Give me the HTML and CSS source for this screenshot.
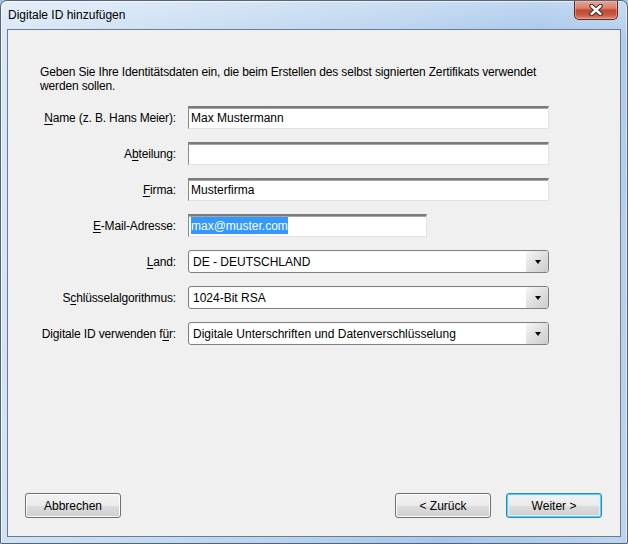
FILE: index.html
```html
<!DOCTYPE html>
<html lang="de">
<head>
<meta charset="utf-8">
<title>Digitale ID hinzufügen</title>
<link rel="stylesheet" href="styles.css">
</head>
<body>
<div class="window">
  <div class="titlebar">
    <span class="title">Digitale ID hinzufügen</span>
    <div class="close">
      <svg width="16" height="12" viewBox="0 0 16 12">
        <path d="M3.5 2 L12.5 10 M12.5 2 L3.5 10" stroke="#3b2a26" stroke-width="4.4" stroke-linecap="round"/>
        <path d="M3.5 2 L12.5 10 M12.5 2 L3.5 10" stroke="#ffffff" stroke-width="2.4" stroke-linecap="round"/>
      </svg>
    </div>
  </div>
  <div class="client">
    <p class="intro">Geben Sie Ihre Identitätsdaten ein, die beim Erstellen des selbst signierten Zertifikats verwendet werden sollen.</p>
    <div class="form">
      <label class="lbl"><u>N</u>ame (z. B. Hans Meier):</label>
      <div class="field">Max Mustermann</div>

      <label class="lbl">A<u>b</u>teilung:</label>
      <div class="field"></div>

      <label class="lbl"><u>F</u>irma:</label>
      <div class="field">Musterfirma</div>

      <label class="lbl"><u>E</u>-Mail-Adresse:</label>
      <div class="field short"><span class="sel">max@muster.com</span></div>

      <label class="lbl"><u>L</u>and:</label>
      <div class="combo"><span class="ctext">DE - DEUTSCHLAND</span><span class="cbtn"><span class="arrow"></span></span></div>

      <label class="lbl">S<u>c</u>hlüsselalgorithmus:</label>
      <div class="combo"><span class="ctext">1024-Bit RSA</span><span class="cbtn"><span class="arrow"></span></span></div>

      <label class="lbl">Digitale ID verwenden f<u>ü</u>r:</label>
      <div class="combo"><span class="ctext">Digitale Unterschriften und Datenverschlüsselung</span><span class="cbtn"><span class="arrow"></span></span></div>
    </div>
    <div class="buttons">
      <button class="btn">Abbrechen</button>
      <div class="spacer"></div>
      <button class="btn">&lt; Zurück</button>
      <button class="btn default">Weiter &gt;</button>
    </div>
  </div>
</div>
</body>
</html>
```

FILE: styles.css
```css
html, body {
  margin: 0;
  padding: 0;
  background: #9fbfe3;
}
body {
  font-family: "Liberation Sans", Arial, sans-serif;
  font-size: 12px;
  color: #000;
}
.window {
  box-sizing: border-box;
  width: 628px;
  height: 544px;
  border: 1px solid #52637a;
  border-radius: 7px 7px 2px 2px;
  padding: 0 6px 6px 6px;
  display: flex;
  flex-direction: column;
  background:
    linear-gradient(to bottom, rgba(255,255,255,0.3), rgba(255,255,255,0) 40px),
    linear-gradient(100deg, #d9e7f6 0%, #c9ddf2 25%, #b6d1ee 55%, #a6c6ea 75%, #bcd4ef 100%);
  box-shadow: inset 1px 1px 0 rgba(255,255,255,0.7), inset -1px 0 0 rgba(255,255,255,0.5);
}
.titlebar {
  height: 28px;
  display: flex;
  align-items: flex-start;
  justify-content: space-between;
}
.title {
  margin-top: 7px;
  margin-left: 1px;
  line-height: 15px;
  color: #000;
}
.close {
  box-sizing: border-box;
  width: 44px;
  height: 19px;
  margin-right: 3px;
  border: 1px solid #5b2b22;
  border-top: none;
  border-radius: 0 0 5px 5px;
  background: linear-gradient(to bottom, #e7a595 0%, #d9806c 40%, #c34a33 50%, #c8563f 75%, #dd8a70 100%);
  box-shadow: inset 0 0 0 1px rgba(255,200,190,0.45);
  display: flex;
  align-items: center;
  justify-content: center;
}
.close svg { display: block; }
.client {
  flex: 1;
  background: #f0f0f0;
  border: 1px solid #6c7c8e;
  display: flex;
  flex-direction: column;
  padding: 35px 18px 18px 17px;
}
.intro {
  margin: 0 0 0 15px;
  line-height: 14px;
  width: 520px;
  letter-spacing: -0.15px;
}
.form {
  margin: 13px 0 0 15px;
  display: grid;
  grid-template-columns: 136px 361px;
  grid-auto-rows: 23px;
  column-gap: 12px;
  row-gap: 13px;
}
.lbl {
  display: flex;
  align-items: center;
  justify-content: flex-end;
  white-space: nowrap;
  letter-spacing: -0.15px;
}
.lbl u { text-decoration-thickness: 1px; text-underline-offset: 2px; }
.field {
  box-sizing: border-box;
  height: 23px;
  background: #fff;
  border-style: solid;
  border-width: 2px 1px 1px 1px;
  border-color: #7b7b7b #e2e2e2 #e2e2e2 #8a8a8a;
  box-shadow: inset 0 1px 0 #a6a6a6;
  padding: 3px 0 0 2px;
  line-height: 15px;
  white-space: nowrap;
  overflow: hidden;
}
.field.short { width: 239px; }
.sel {
  background: #3399ff;
  color: #fff;
  padding: 2px 0 1px 0;
}
.combo {
  box-sizing: border-box;
  height: 23px;
  border: 1px solid #7f7f7f;
  border-radius: 3px;
  background: #fff;
  display: flex;
  align-items: stretch;
  box-shadow: inset 0 0 0 1px #fbfbfb;
  overflow: hidden;
}
.ctext {
  flex: 1;
  display: flex;
  align-items: center;
  padding-left: 4px;
  white-space: nowrap;
}
.cbtn {
  width: 22px;
  display: flex;
  align-items: center;
  justify-content: center;
  background: linear-gradient(to right, rgba(255,255,255,1), rgba(232,232,232,1)),
              linear-gradient(to bottom, #f6f6f6, #e0e0e0);
  background-blend-mode: multiply;
}
.arrow {
  width: 0;
  height: 0;
  border-left: 3.5px solid transparent;
  border-right: 3.5px solid transparent;
  border-top: 4px solid #000;
  margin-left: 2px;
  margin-top: 1px;
}
.buttons {
  margin-top: auto;
  display: flex;
  gap: 15px;
}
.spacer { flex: 1; }
.btn {
  box-sizing: border-box;
  width: 96px;
  height: 25px;
  margin: 0;
  padding: 0;
  font-family: "Liberation Sans", Arial, sans-serif;
  font-size: 12px;
  color: #000;
  border: 1px solid #707070;
  border-radius: 3px;
  background: linear-gradient(to bottom, #f2f2f2 0%, #ebebeb 50%, #dddddd 51%, #cfcfcf 100%);
  box-shadow: inset 0 0 0 1px #fcfcfc;
}
.btn.default {
  border-color: #3c7fb1;
  box-shadow: inset 0 0 0 1px #48d8fb, inset 0 0 0 2px #d8f1fb;
}
```
